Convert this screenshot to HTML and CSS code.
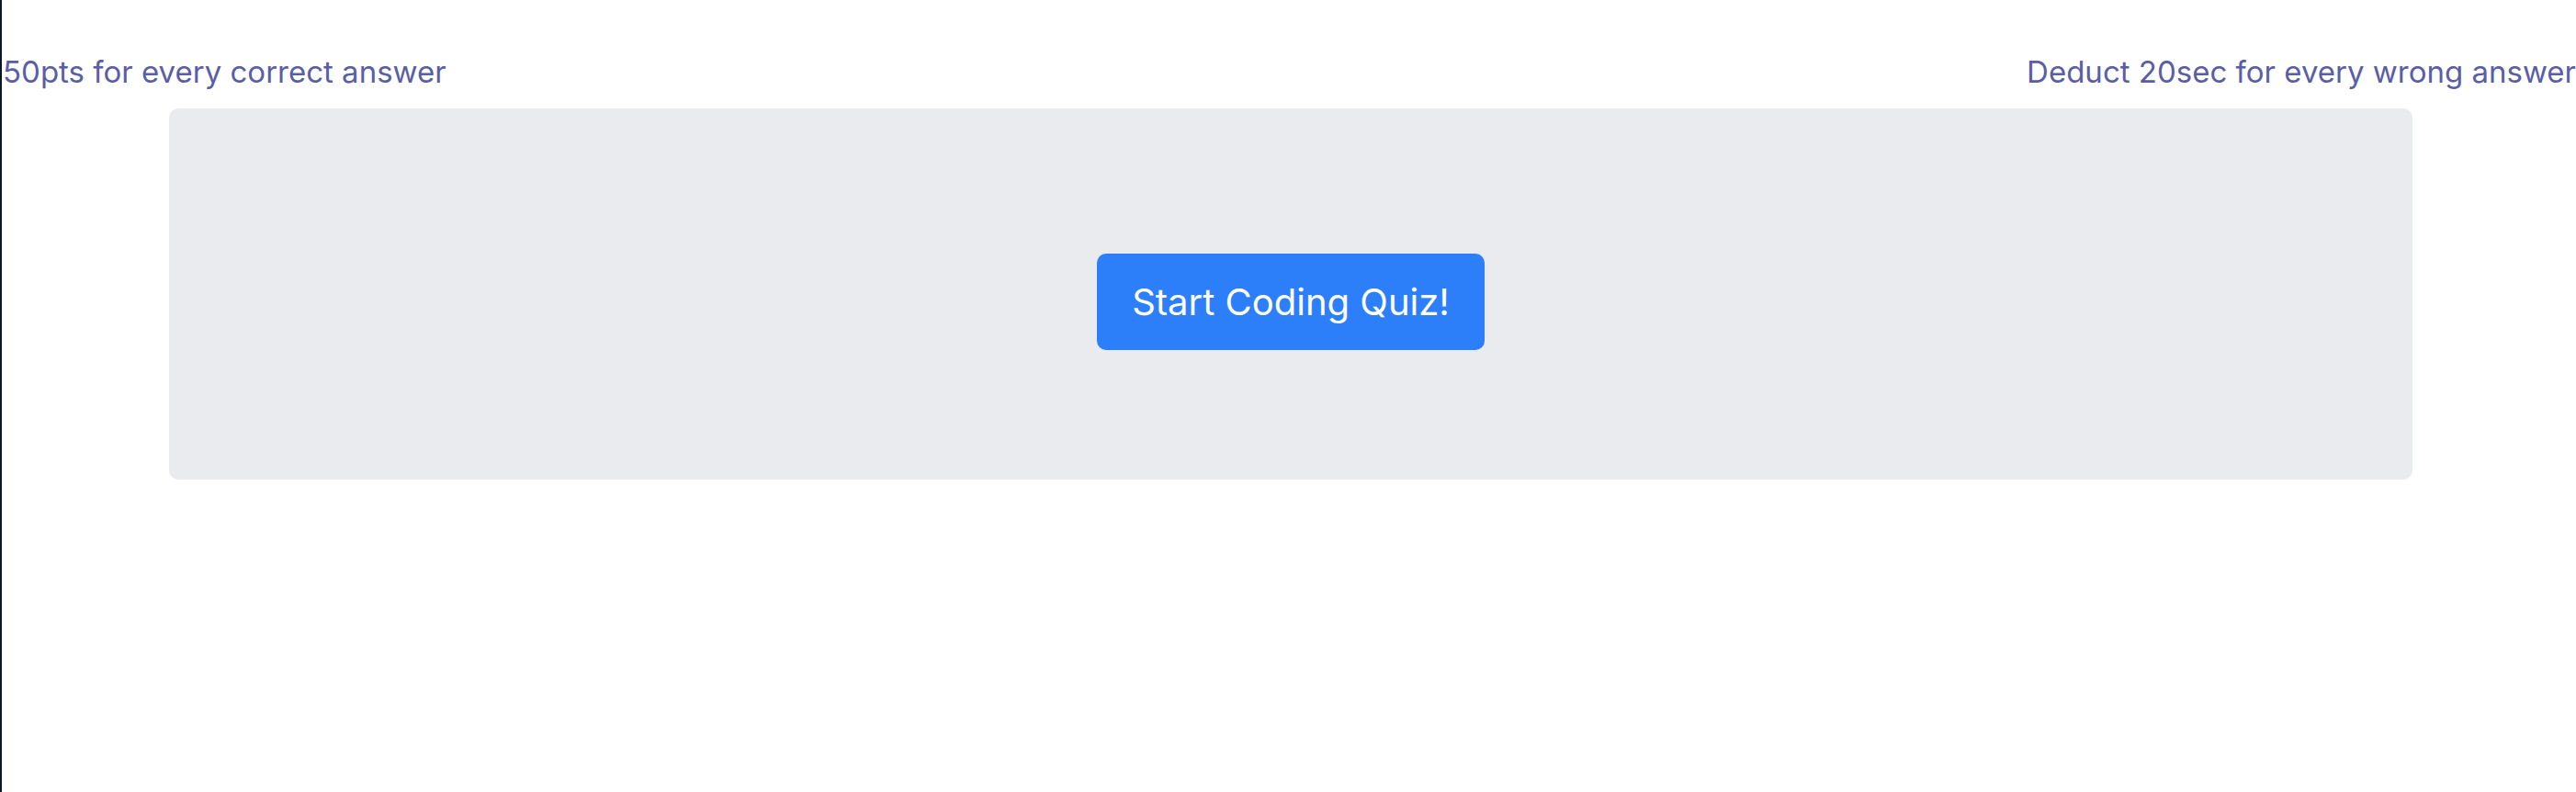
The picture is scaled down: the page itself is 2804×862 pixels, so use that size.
FILE: index.html
```html
<!DOCTYPE html>
<html lang="en">
<head>
<meta charset="utf-8">
<title>Coding Quiz</title>
<link rel="stylesheet" href="styles.css">
</head>
<body>
  <div class="page">
    <header class="rules">
      <span class="rule">50pts for every correct answer</span>
      <span class="rule">Deduct 20sec for every wrong answer</span>
    </header>
    <main class="jumbotron">
      <button class="start-btn" type="button">Start Coding Quiz!</button>
    </main>
  </div>
</body>
</html>
```

FILE: styles.css
```css
* {
  box-sizing: border-box;
}

html, body {
  margin: 0;
  padding: 0;
  height: 100%;
  background: #ffffff;
}

body {
  font-family: Inter, "Liberation Sans", Arial, sans-serif;
  border-left: 2px solid #0b1626;
}

.page {
  display: flex;
  flex-direction: column;
}

.rules {
  display: flex;
  justify-content: space-between;
  align-items: center;
  padding-top: 59px;
  padding-left: 1px;
  height: 98px;
}

.rule {
  font-size: 33px;
  line-height: 39px;
  color: #5a5ea6;
  white-space: nowrap;
}

.jumbotron {
  margin-top: 20px;
  margin-left: 182px;
  width: 2442px;
  height: 404px;
  background: #e9ebef;
  border-radius: 10px;
  display: flex;
  justify-content: center;
  align-items: flex-start;
  padding-top: 158px;
}

.start-btn {
  font-family: Inter, "Liberation Sans", Arial, sans-serif;
  font-size: 40px;
  line-height: 49px;
  color: #ffffff;
  background: #2d7ff9;
  border: none;
  border-radius: 10px;
  padding: 28px 38px;
  cursor: pointer;
}
```
